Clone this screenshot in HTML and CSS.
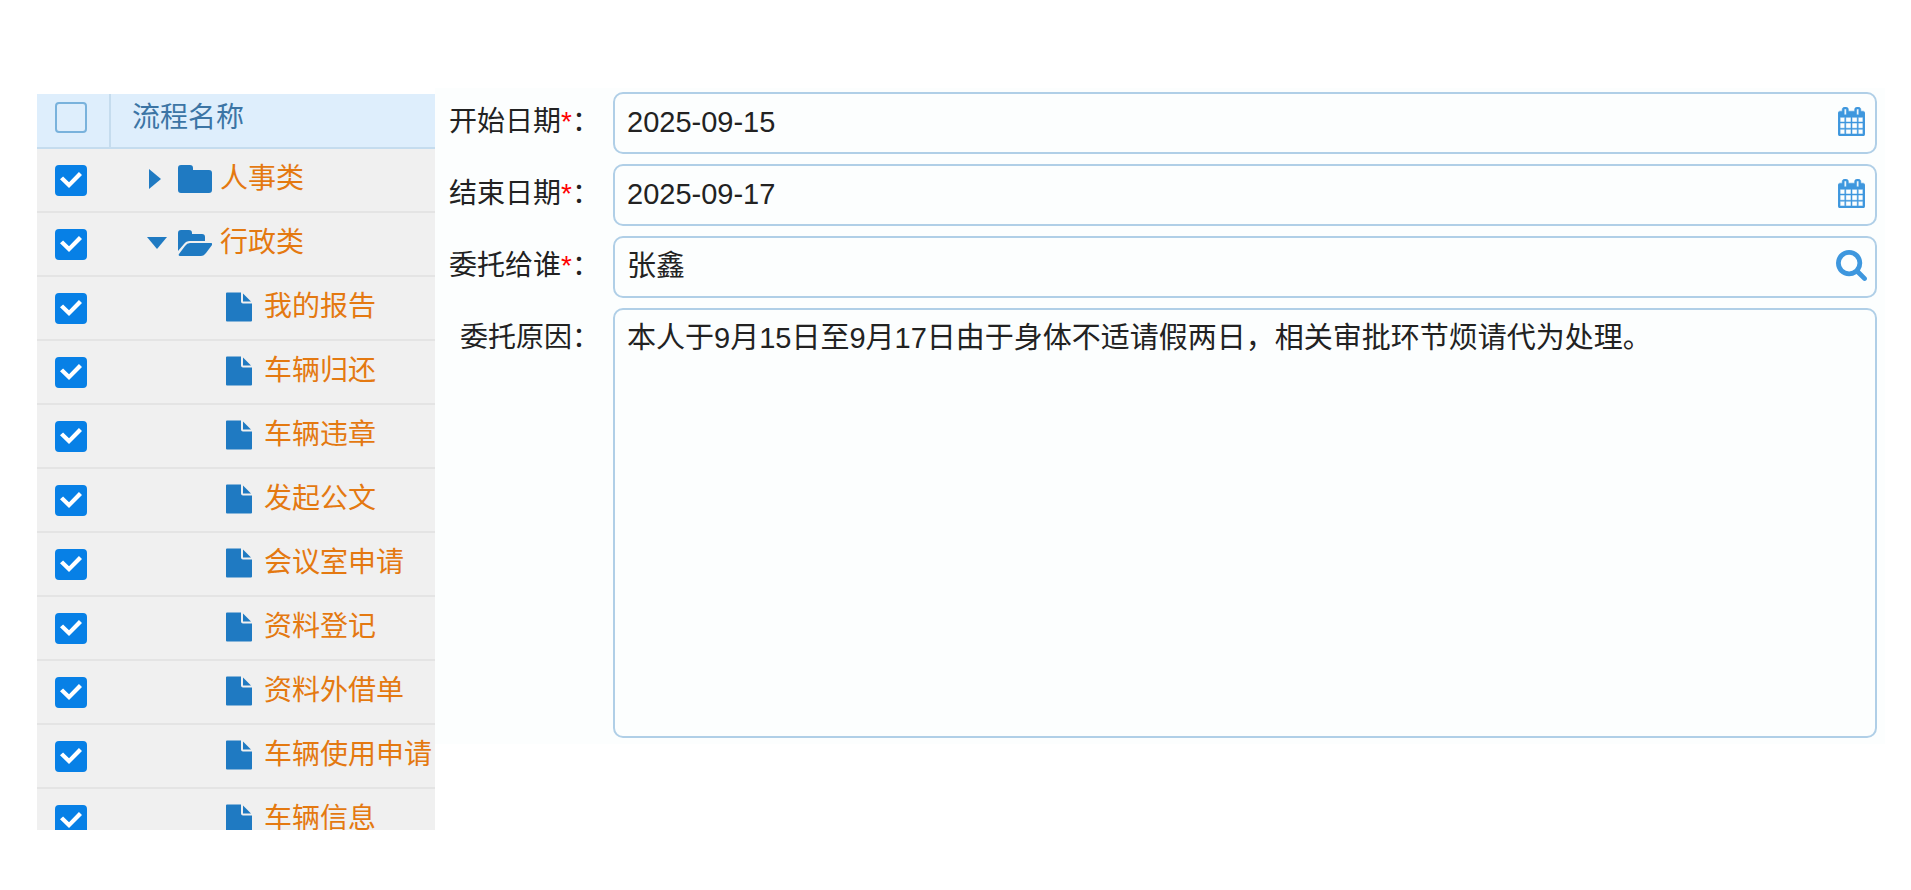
FILE: index.html
```
<!DOCTYPE html>
<html lang="zh-CN">
<head>
  <meta charset="UTF-8">
  <meta name="viewport" content="width=device-width, initial-scale=1.0">
  <title>流程委托</title>
  <link rel="stylesheet" href="styles.css">
</head>
<body>
  <!-- shared icons -->
  <svg class="icon-defs" aria-hidden="true">
    <symbol id="i-right" viewBox="0 0 12 20"><path d="M0 0l12 10L0 20z"/></symbol>
    <symbol id="i-down" viewBox="0 0 20 12"><path d="M0 0h20L10 12z"/></symbol>
    <symbol id="i-folder" viewBox="0 0 34 28"><path d="M3 0h9q3 0 3 3v2h16q3 0 3 3v17q0 3-3 3H3q-3 0-3-3V3q0-3 3-3z"/></symbol>
    <symbol id="i-open" viewBox="0 0 34 26"><path d="M3 0h8q3 0 3 3v1h10q3 0 3 3v4H12q-4 0-6 3L0 21V3q0-3 3-3z"/><path d="M12 13h21q2 0 1 2l-6 8q-2 3-5 3H2q-2 0-1-2l6-8q2-3 5-3z"/></symbol>
    <symbol id="i-file" viewBox="0 0 26 29"><path d="M1 0h14v9q0 2 2 2h9v17q0 1-1 1H1q-1 0-1-1V1q0-1 1-1z"/><path d="M17 1l8 8h-8z"/></symbol>
    <symbol id="i-calendar" viewBox="0 0 1664 1792"><path d="M128 1664h288v-288h-288v288zm352 0h320v-288h-320v288zm-352-352h288v-320h-288v320zm352 0h320v-320h-320v320zm-352-384h288v-288h-288v288zm736 736h320v-288h-320v288zm-384-736h320v-288h-320v288zm768 736h288v-288h-288v288zm-384-352h320v-320h-320v320zm-352-864v-288q0-13-9.5-22.5t-22.5-9.5h-64q-13 0-22.5 9.5t-9.5 22.5v288q0 13 9.5 22.5t22.5 9.5h64q13 0 22.5-9.5t9.5-22.5zm736 864h288v-320h-288v320zm-384-384h320v-288h-320v288zm384 0h288v-288h-288v288zm32-480v-288q0-13-9.5-22.5t-22.5-9.5h-64q-13 0-22.5 9.5t-9.5 22.5v288q0 13 9.5 22.5t22.5 9.5h64q13 0 22.5-9.5t9.5-22.5zm384-64v1280q0 52-38 90t-90 38h-1408q-52 0-90-38t-38-90v-1280q0-52 38-90t90-38h128v-96q0-66 47-113t113-47h64q66 0 113 47t47 113v96h384v-96q0-66 47-113t113-47h64q66 0 113 47t47 113v96h128q52 0 90 38t38 90z"/></symbol>
    <symbol id="i-search" viewBox="0 0 1664 1664"><path d="M1152 704q0-185-131.5-316.5t-316.5-131.5-316.5 131.5-131.5 316.5 131.5 316.5 316.5 131.5 316.5-131.5 131.5-316.5zm512 832q0 52-38 90t-90 38q-54 0-90-38l-343-342q-179 124-399 124-143 0-273.5-55.5t-225-150-150-225-55.5-273.5 55.5-273.5 150-225 225-150 273.5-55.5 273.5 55.5 225 150 150 225 55.5 273.5q0 220-124 399l343 343q37 37 37 90z"/></symbol>
  </svg>

  <main class="page">
    <!-- process tree -->
    <div class="tree">
      <table>
        <thead>
          <tr><th class="check"><input type="checkbox" aria-label="全选"></th><th class="name">流程名称</th></tr>
        </thead>
        <tbody>
          <tr>
            <td class="check"><input type="checkbox" aria-label="人事类" checked></td>
            <td><div class="node"><button type="button" class="toggle" aria-label="展开"><svg class="right"><use href="#i-right"/></svg></button><svg class="folder"><use href="#i-folder"/></svg><a href="#">人事类</a></div></td>
          </tr>
          <tr>
            <td class="check"><input type="checkbox" aria-label="行政类" checked></td>
            <td><div class="node"><button type="button" class="toggle" aria-label="收起"><svg class="down"><use href="#i-down"/></svg></button><svg class="folder open"><use href="#i-open"/></svg><a href="#">行政类</a></div></td>
          </tr>
          <tr>
            <td class="check"><input type="checkbox" aria-label="我的报告" checked></td>
            <td><div class="node leaf"><svg class="file"><use href="#i-file"/></svg><a href="#">我的报告</a></div></td>
          </tr>
          <tr>
            <td class="check"><input type="checkbox" aria-label="车辆归还" checked></td>
            <td><div class="node leaf"><svg class="file"><use href="#i-file"/></svg><a href="#">车辆归还</a></div></td>
          </tr>
          <tr>
            <td class="check"><input type="checkbox" aria-label="车辆违章" checked></td>
            <td><div class="node leaf"><svg class="file"><use href="#i-file"/></svg><a href="#">车辆违章</a></div></td>
          </tr>
          <tr>
            <td class="check"><input type="checkbox" aria-label="发起公文" checked></td>
            <td><div class="node leaf"><svg class="file"><use href="#i-file"/></svg><a href="#">发起公文</a></div></td>
          </tr>
          <tr>
            <td class="check"><input type="checkbox" aria-label="会议室申请" checked></td>
            <td><div class="node leaf"><svg class="file"><use href="#i-file"/></svg><a href="#">会议室申请</a></div></td>
          </tr>
          <tr>
            <td class="check"><input type="checkbox" aria-label="资料登记" checked></td>
            <td><div class="node leaf"><svg class="file"><use href="#i-file"/></svg><a href="#">资料登记</a></div></td>
          </tr>
          <tr>
            <td class="check"><input type="checkbox" aria-label="资料外借单" checked></td>
            <td><div class="node leaf"><svg class="file"><use href="#i-file"/></svg><a href="#">资料外借单</a></div></td>
          </tr>
          <tr>
            <td class="check"><input type="checkbox" aria-label="车辆使用申请" checked></td>
            <td><div class="node leaf"><svg class="file"><use href="#i-file"/></svg><a href="#">车辆使用申请</a></div></td>
          </tr>
          <tr>
            <td class="check"><input type="checkbox" aria-label="车辆信息" checked></td>
            <td><div class="node leaf"><svg class="file"><use href="#i-file"/></svg><a href="#">车辆信息</a></div></td>
          </tr>
        </tbody>
      </table>
    </div>

    <!-- delegation form -->
    <form class="form">
      <label for="start">开始日期<span class="required">*</span>：</label>
      <div class="field">
        <input type="text" id="start" value="2025-09-15">
        <button type="button" aria-label="选择开始日期"><svg class="calendar"><use href="#i-calendar"/></svg></button>
      </div>

      <label for="end">结束日期<span class="required">*</span>：</label>
      <div class="field">
        <input type="text" id="end" value="2025-09-17">
        <button type="button" aria-label="选择结束日期"><svg class="calendar"><use href="#i-calendar"/></svg></button>
      </div>

      <label for="person">委托给谁<span class="required">*</span>：</label>
      <div class="field">
        <input type="text" id="person" value="张鑫">
        <button type="button" aria-label="查找人员"><svg class="search"><use href="#i-search"/></svg></button>
      </div>

      <label for="reason">委托原因：</label>
      <textarea id="reason">本人于9月15日至9月17日由于身体不适请假两日，相关审批环节烦请代为处理。</textarea>
    </form>
  </main>
</body>
</html>
```
FILE: styles.css
```
* {
  box-sizing: border-box;
}

body {
  margin: 0;
  background-color: #fff;
  color: #222;
  font-family: "Liberation Sans", "Noto Sans CJK SC", sans-serif;
  font-size: 28px;
  line-height: 40px;
}

button {
  padding: 0;
  border: none;
  background: none;
  cursor: pointer;
}

svg {
  display: block;
  flex: none;
  fill: currentColor;
}

.icon-defs {
  display: none;
}

.page {
  display: flex;
  align-items: flex-start;
  padding: 88px 26px 40px 37px;
}

/* process tree */
.tree {
  flex: none;
  width: 398px;
  max-height: 736px;
  margin-top: 6px;
  overflow: hidden;
  background-color: #f0f0f0;
}

table {
  width: 100%;
  table-layout: fixed;
  border-collapse: separate;
  border-spacing: 0;
}

th,
td {
  height: 64px;
  padding: 0;
  border-bottom: 2px solid #e4e4e4;
  text-align: left;
}

th {
  height: 55px;
  padding-bottom: 6px;
  border-bottom-color: #c5dcee;
  background-color: #deeefc;
  color: #3c75a5;
  font-weight: normal;
}

.check {
  width: 74px;
  padding-left: 18px;
}

th.check {
  border-right: 2px solid #c5dcee;
}

th.name {
  padding-left: 21px;
}

.check input {
  display: grid;
  place-items: center;
  width: 32px;
  height: 31px;
  margin: 0;
  appearance: none;
  border: 2px solid #79b2dc;
  border-radius: 4px;
}

.check input:checked {
  border-color: #0780e6;
  background-color: #0780e6;
}

.check input:checked::before {
  content: "";
  width: 22px;
  height: 16px;
  background-color: #fff;
  clip-path: polygon(0 46%, 14% 28%, 41% 64%, 86% 0, 100% 18%, 41% 100%);
}

.node {
  display: flex;
  align-items: center;
  padding: 0 0 3px 34px;
  color: #1f7ac2;
  white-space: nowrap;
}

.node a {
  margin-left: 8px;
  color: #e47911;
  text-decoration: none;
}

.leaf {
  padding-left: 115px;
}

.leaf a {
  margin-left: 12px;
}

.toggle {
  display: flex;
  justify-content: center;
  width: 24px;
  margin-right: 9px;
  color: #1f7ac2;
}

.right {
  width: 12px;
  height: 20px;
  margin-right: 4px;
}

.down {
  width: 20px;
  height: 12px;
}

.folder {
  width: 34px;
  height: 28px;
}

.folder.open {
  height: 26px;
}

.file {
  width: 26px;
  height: 30px;
}

/* delegation form */
.form {
  display: grid;
  flex: 1;
  grid-template-columns: 165px 1fr;
  gap: 10px 13px;
  padding: 4px 8px 6px 0;
  background-color: #fcfefe;
}

label {
  padding-top: 10px;
  text-align: right;
  white-space: nowrap;
}

.required {
  color: #f00;
}

.field,
textarea {
  border: 2px solid #b0cfe7;
  border-radius: 10px;
}

.field {
  display: flex;
  height: 62px;
}

.field input,
textarea {
  background: none;
  color: inherit;
  font: inherit;
  font-size: 29px;
  outline: none;
}

.field input {
  flex: 1;
  min-width: 0;
  padding: 0 12px 3px;
  border: none;
}

.field button {
  display: grid;
  place-items: center;
  width: 48px;
  padding-bottom: 4px;
  color: #3e97de;
}

.calendar {
  width: 27px;
  height: 29px;
  stroke: currentColor;
  stroke-width: 30px;
}

.search {
  width: 31px;
  height: 31px;
}

textarea {
  display: block;
  width: 100%;
  height: 430px;
  padding: 8px 12px;
  resize: none;
}
```
